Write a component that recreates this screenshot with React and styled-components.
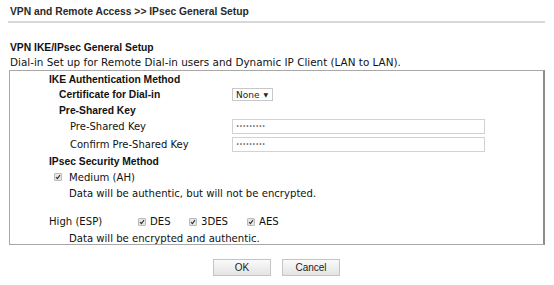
import React from 'react'
import styled, { createGlobalStyle } from 'styled-components'

const GlobalStyle = createGlobalStyle`
  html, body {
    margin: 0;
    padding: 0;
    background: #fff;
  }
  body {
    font-family: "DejaVu Sans", Verdana, sans-serif;
    color: #111;
  }
`

const Page = styled.div`
  width: 554px;
  height: 285px;
  padding: 0 9px 0 8px;
  box-sizing: border-box;
  overflow: hidden;
`

const Title = styled.div`
  height: 21px;
  line-height: 24px;
  padding-left: 2px;
  font-family: "Liberation Sans", Arial, sans-serif;
  font-weight: bold;
  font-size: 10.3px;
  color: #2a2a2a;
  border-bottom: 2px solid #d8d8d8;
`

const Heading = styled.div`
  margin-top: 17px;
  height: 15px;
  line-height: 15px;
  padding-left: 2px;
  font-family: "Liberation Sans", Arial, sans-serif;
  font-weight: bold;
  font-size: 10.3px;
  color: #111;
`

const Note = styled.div`
  height: 15px;
  line-height: 15px;
  padding-left: 2px;
  font-size: 10.4px;
`

const Box = styled.div`
  margin-left: 1px;
  border: 1px solid #a8a8a8;
  border-right: 2px solid #8c8c8c;
  height: 175px;
  box-sizing: border-box;
`

const Row = styled.div`
  display: flex;
  align-items: center;
  height: ${p => p.h}px;
`

const Label = styled.div`
  width: ${p => 222 - p.indent}px;
  padding-left: ${p => p.indent}px;
  font-family: ${p => (p.bold ? '"Liberation Sans", Arial, sans-serif' : '"DejaVu Sans", Verdana, sans-serif')};
  font-weight: ${p => (p.bold ? 'bold' : 'normal')};
  font-size: ${p => (p.bold ? '10.3px' : '10px')};
  white-space: nowrap;
`

const Text = styled.div`
  padding-left: ${p => p.indent}px;
  font-size: 10.1px;
  white-space: nowrap;
  display: flex;
  align-items: center;
`

const Select = styled.div`
  width: 41px;
  height: 13px;
  box-sizing: border-box;
  border: 1px solid #c8c8c8;
  font-size: 9px;
  display: flex;
  align-items: center;
  padding-left: 3px;
  gap: 4px;
  color: #222;
  span {
    font-size: 6px;
  }
`

const Input = styled.div`
  width: 253px;
  height: 15px;
  box-sizing: border-box;
  border: 1px solid #d2d2d2;
  font-size: 5.5px;
  line-height: 13px;
  padding-left: 3px;
  color: #333;
`

const Check = styled.span`
  display: inline-flex;
  width: 8px;
  height: 8px;
  box-sizing: border-box;
  border: 1px solid #bbb;
  background: #e6e6e6;
  border-radius: 1px;
  margin-right: ${p => p.gap}px;
  svg {
    display: block;
  }
`

const Cell = styled.div`
  display: flex;
  align-items: center;
  width: ${p => p.w}px;
`

const Buttons = styled.div`
  display: flex;
  justify-content: center;
  gap: 11px;
  margin-top: 14px;
`

const Button = styled.button`
  width: 58px;
  height: 17px;
  padding: 0;
  border: 1px solid #c4c4c4;
  background: linear-gradient(#fafafa, #e4e4e4);
  font-family: "Liberation Sans", Arial, sans-serif;
  font-size: 10px;
  color: #222;
`

function Tick({ gap = 7 }) {
  return (
    <Check gap={gap}>
      <svg width="6" height="6" viewBox="0 0 6 6">
        <path d="M1 3.2 L2.4 4.6 L5 1.2" fill="none" stroke="#333" strokeWidth="1.1" />
      </svg>
    </Check>
  )
}

export default function App() {
  return (
    <>
      <GlobalStyle />
      <Page>
        <Title>VPN and Remote Access &gt;&gt; IPsec General Setup</Title>
        <Heading>VPN IKE/IPsec General Setup</Heading>
        <Note>Dial-in Set up for Remote Dial-in users and Dynamic IP Client (LAN to LAN).</Note>
        <Box>
          <Row h={16}>
            <Label bold indent={39}>IKE Authentication Method</Label>
          </Row>
          <Row h={15}>
            <Label bold indent={49}>Certificate for Dial-in</Label>
            <Select>None <span>▼</span></Select>
          </Row>
          <Row h={16}>
            <Label bold indent={49}>Pre-Shared Key</Label>
          </Row>
          <Row h={17}>
            <Label indent={60}>Pre-Shared Key</Label>
            <Input>•••••••••</Input>
          </Row>
          <Row h={18}>
            <Label indent={60}>Confirm Pre-Shared Key</Label>
            <Input>•••••••••</Input>
          </Row>
          <Row h={16}>
            <Label bold indent={39}>IPsec Security Method</Label>
          </Row>
          <Row h={16}>
            <Text indent={44}><Tick /> Medium (AH)</Text>
          </Row>
          <Row h={16}>
            <Text indent={59}>Data will be authentic, but will not be encrypted.</Text>
          </Row>
          <Row h={12} />
          <Row h={17}>
            <Text indent={39}>
              <Cell w={89}>High (ESP)</Cell>
              <Cell w={51}><Tick gap={4} />DES</Cell>
              <Cell w={58}><Tick gap={4} />3DES</Cell>
              <Cell w={40}><Tick gap={4} />AES</Cell>
            </Text>
          </Row>
          <Row h={16}>
            <Text indent={59}>Data will be encrypted and authentic.</Text>
          </Row>
        </Box>
        <Buttons>
          <Button>OK</Button>
          <Button>Cancel</Button>
        </Buttons>
      </Page>
    </>
  )
}
